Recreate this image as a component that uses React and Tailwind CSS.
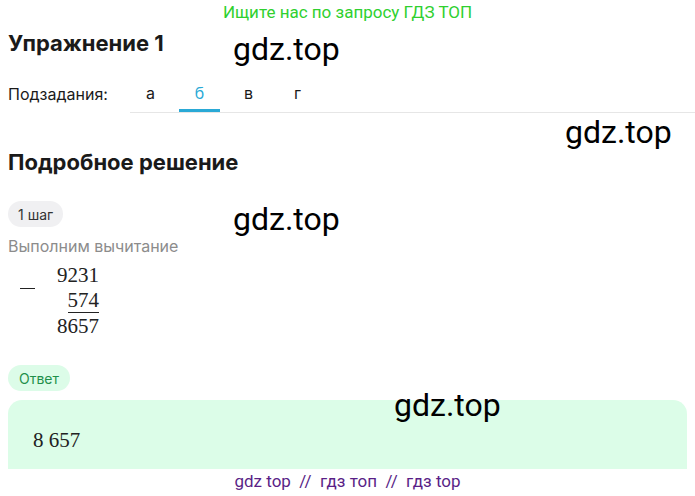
import React from 'react'

const TABS = ['а', 'б', 'в', 'г']

// Watermark that sits over the page content
function Mark({ className }) {
  return (
    <span className={`absolute pointer-events-none font-['Roboto',sans-serif] text-[32px] leading-none text-black ${className}`}>
      gdz.top
    </span>
  )
}

export default function App() {
  return (
    <div className="relative w-[695px] h-[496px] overflow-hidden bg-white font-['Inter',sans-serif] text-[#1a1a1a]">
      {/* ── Top promo line ─────────────────────── */}
      <div className="h-[24px] pt-[3px] text-center font-['Roboto',sans-serif] text-[17px] leading-[18px] text-[#2fd02f]">
        Ищите нас по запросу ГДЗ ТОП
      </div>

      {/* ── Title ──────────────────────────────── */}
      <h1 className="px-2 mt-[5px] text-[22px] leading-[28px] font-bold">Упражнение 1</h1>

      {/* ── Subtasks ───────────────────────────── */}
      <div className="flex items-end mt-[26px] pl-2">
        <span className="text-[16px] leading-[20px] pb-[9px] w-[122px]">Подзадания:</span>
        <div className="flex flex-1 gap-[8px] border-b border-[#e6e6e6]">
          {TABS.map((t, i) => (
            <div
              key={t}
              className={`w-[41px] text-center text-[16px] leading-[20px] pb-[6px] border-b-[3px] ${
                i === 1 ? 'border-[#2aa9d6] text-[#2aa9d6]' : 'border-transparent'
              }`}
            >
              {t}
            </div>
          ))}
        </div>
      </div>

      {/* ── Solution ───────────────────────────── */}
      <h2 className="px-2 mt-[35px] text-[22px] leading-[28px] font-bold">Подробное решение</h2>

      <div className="px-2 mt-[25px]">
        <span className="inline-flex items-center h-[26px] px-[10px] rounded-full bg-[#f0f0f2] text-[14px] text-[#333]">
          1 шаг
        </span>
      </div>
      <p className="px-2 mt-[9px] text-[16px] leading-[20px] text-[#8c8c8c]">Выполним вычитание</p>

      <div className="grid grid-cols-[auto_auto] justify-start mt-[7px] pl-[20px] font-['Liberation_Serif',serif] text-[21px] text-[#222]">
        <div className="row-span-2 flex items-center pr-[22px]">
          <span className="block w-[15px] h-[1px] bg-[#222]" />
        </div>
        <span className="text-right leading-[25px]">9231</span>
        <span className="justify-self-end leading-[24px] border-b border-[#222]">574</span>
        <span className="col-start-2 text-right leading-[26px]">8657</span>
      </div>

      {/* ── Answer ─────────────────────────────── */}
      <div className="px-2 mt-[26px]">
        <span className="inline-flex items-center h-[26px] px-[11px] rounded-full bg-[#dcfce8] text-[14px] text-[#1f8f4a]">
          Ответ
        </span>
      </div>
      <div className="mx-2 mt-[9px] h-[90px] rounded-t-[14px] bg-[#dcfde8] pt-[30px] pl-[25px] font-['Liberation_Serif',serif] text-[21px] leading-[20px] text-[#222]">
        8 657
      </div>

      {/* ── Footer ─────────────────────────────── */}
      <div className="absolute left-0 right-0 bottom-0 h-[27px] bg-white text-center font-['Roboto',sans-serif] text-[17px] leading-[24px] text-[#5a1f87]">
        gdz top&nbsp; //&nbsp; гдз топ&nbsp; //&nbsp; гдз top
      </div>

      <Mark className="left-[233px] top-[33px]" />
      <Mark className="left-[565px] top-[116px]" />
      <Mark className="left-[233px] top-[203px]" />
      <Mark className="left-[394px] top-[389px]" />
    </div>
  )
}
